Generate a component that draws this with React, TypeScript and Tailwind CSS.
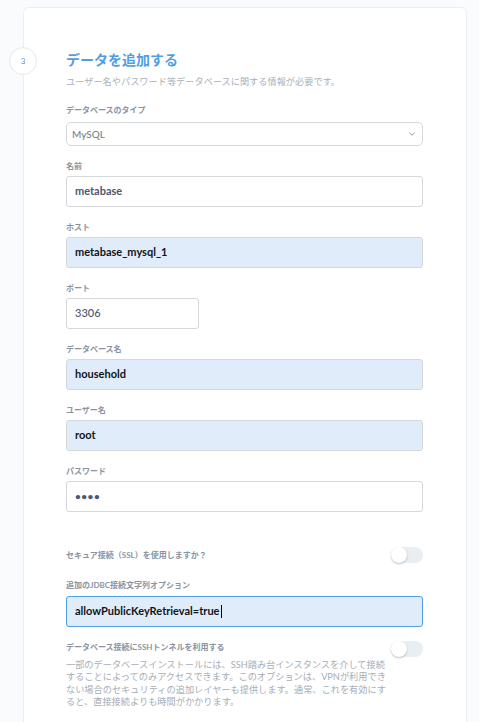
import { ChevronDown } from "lucide-react";

const fields = [
  { label: "名前", value: "metabase", filled: false },
  { label: "ホスト", value: "metabase_mysql_1", filled: true },
  { label: "ポート", value: "3306", filled: false, short: true },
  { label: "データベース名", value: "household", filled: true },
  { label: "ユーザー名", value: "root", filled: true },
  { label: "パスワード", value: "••••", filled: false, secret: true },
];

function Label({ children }: { children: React.ReactNode }) {
  return (
    <p className="text-[8px] font-bold leading-[12px] text-[#8a94a3]">{children}</p>
  );
}

function Toggle() {
  return (
    <div className="flex h-[16px] w-[32px] shrink-0 items-center rounded-full bg-[#e8eef2]">
      <div className="h-[16px] w-[16px] rounded-full bg-white shadow-[0_1px_2px_rgba(0,0,0,0.25)]" />
    </div>
  );
}

export default function App() {
  return (
    <div className="h-[722px] w-[479px] overflow-hidden bg-[#f9fbfc] pl-[23px] pr-[12px] pt-[7px] font-[family-name:Lato,'Noto_Sans_CJK_JP',sans-serif]">
      <div className="relative rounded-md border border-[#eceef0] bg-white pb-10 pl-[42px] pr-[43px] pt-[43px]">
        {/* Step badge */}
        <div className="absolute -left-[15px] top-[39px] flex h-[28px] w-[28px] items-center justify-center rounded-full border border-[#e6e9eb] bg-white text-[8px] text-[#509ee3]">
          3
        </div>

        <h2 className="text-[14px] font-bold leading-[18px] text-[#509ee3]">データを追加する</h2>
        <p className="mt-[7px] text-[9.2px] leading-[12px] text-[#a9b1ba]">
          ユーザー名やパスワード等データベースに関する情報が必要です。
        </p>

        <div className="mt-4">
          <Label>データベースのタイプ</Label>
          <div className="mt-[6px] flex h-[24px] items-center justify-between rounded-[5px] border border-[#d4d8db] pl-[5px] pr-[5px]">
            <span className="text-[10px] font-medium text-[#74838f]">MySQL</span>
            <ChevronDown size={10} strokeWidth={2.5} className="text-[#a6aeb6]" />
          </div>
        </div>

        {fields.map((f) => (
          <div key={f.label} className="mt-[14px]">
            <Label>{f.label}</Label>
            <div
              className={`mt-1 flex h-[31px] items-center rounded-[3px] border border-[#d4d8db] pl-2 ${
                f.short ? "w-[133px]" : "w-full"
              } ${f.filled ? "bg-[#e1ecfa]" : "bg-white"}`}
            >
              <span
                className={
                  f.secret
                    ? "text-[10px] font-bold tracking-[0.5px] text-[#4c5773]"
                    : f.filled
                      ? "text-[11px] font-bold text-[#111418]"
                      : f.short
                        ? "text-[11px] font-medium text-[#4c5773]"
                        : "text-[11px] font-bold text-[#4c5773]"
                }
              >
                {f.value}
              </span>
            </div>
          </div>
        ))}

        <div className="mt-[35px] flex items-center justify-between">
          <Label>セキュア接続（SSL）を使用しますか？</Label>
          <Toggle />
        </div>

        <div className="mt-4">
          <Label>追加のJDBC接続文字列オプション</Label>
          <div className="mt-[5px] flex h-[31px] items-center rounded-[3px] border border-[#509ee3] bg-[#e1ecfa] pl-2">
            <span className="text-[11px] font-bold text-[#111418]">allowPublicKeyRetrieval=true</span>
            <span className="ml-px h-[13px] w-px bg-black" />
          </div>
        </div>

        <div className="mt-[14px] flex items-start justify-between">
          <div>
            <Label>データベース接続にSSHトンネルを利用する</Label>
            <p className="mt-[6px] text-[9.2px] leading-[12.4px] text-[#a6aeb7]">
              一部のデータベースインストールには、SSH踏み台インスタンスを介して接続
              <br />
              することによってのみアクセスできます。このオプションは、VPNが利用でき
              <br />
              ない場合のセキュリティの追加レイヤーも提供します。通常、これを有効にす
              <br />
              ると、直接接続よりも時間がかかります。
            </p>
          </div>
          <Toggle />
        </div>
      </div>
    </div>
  );
}
